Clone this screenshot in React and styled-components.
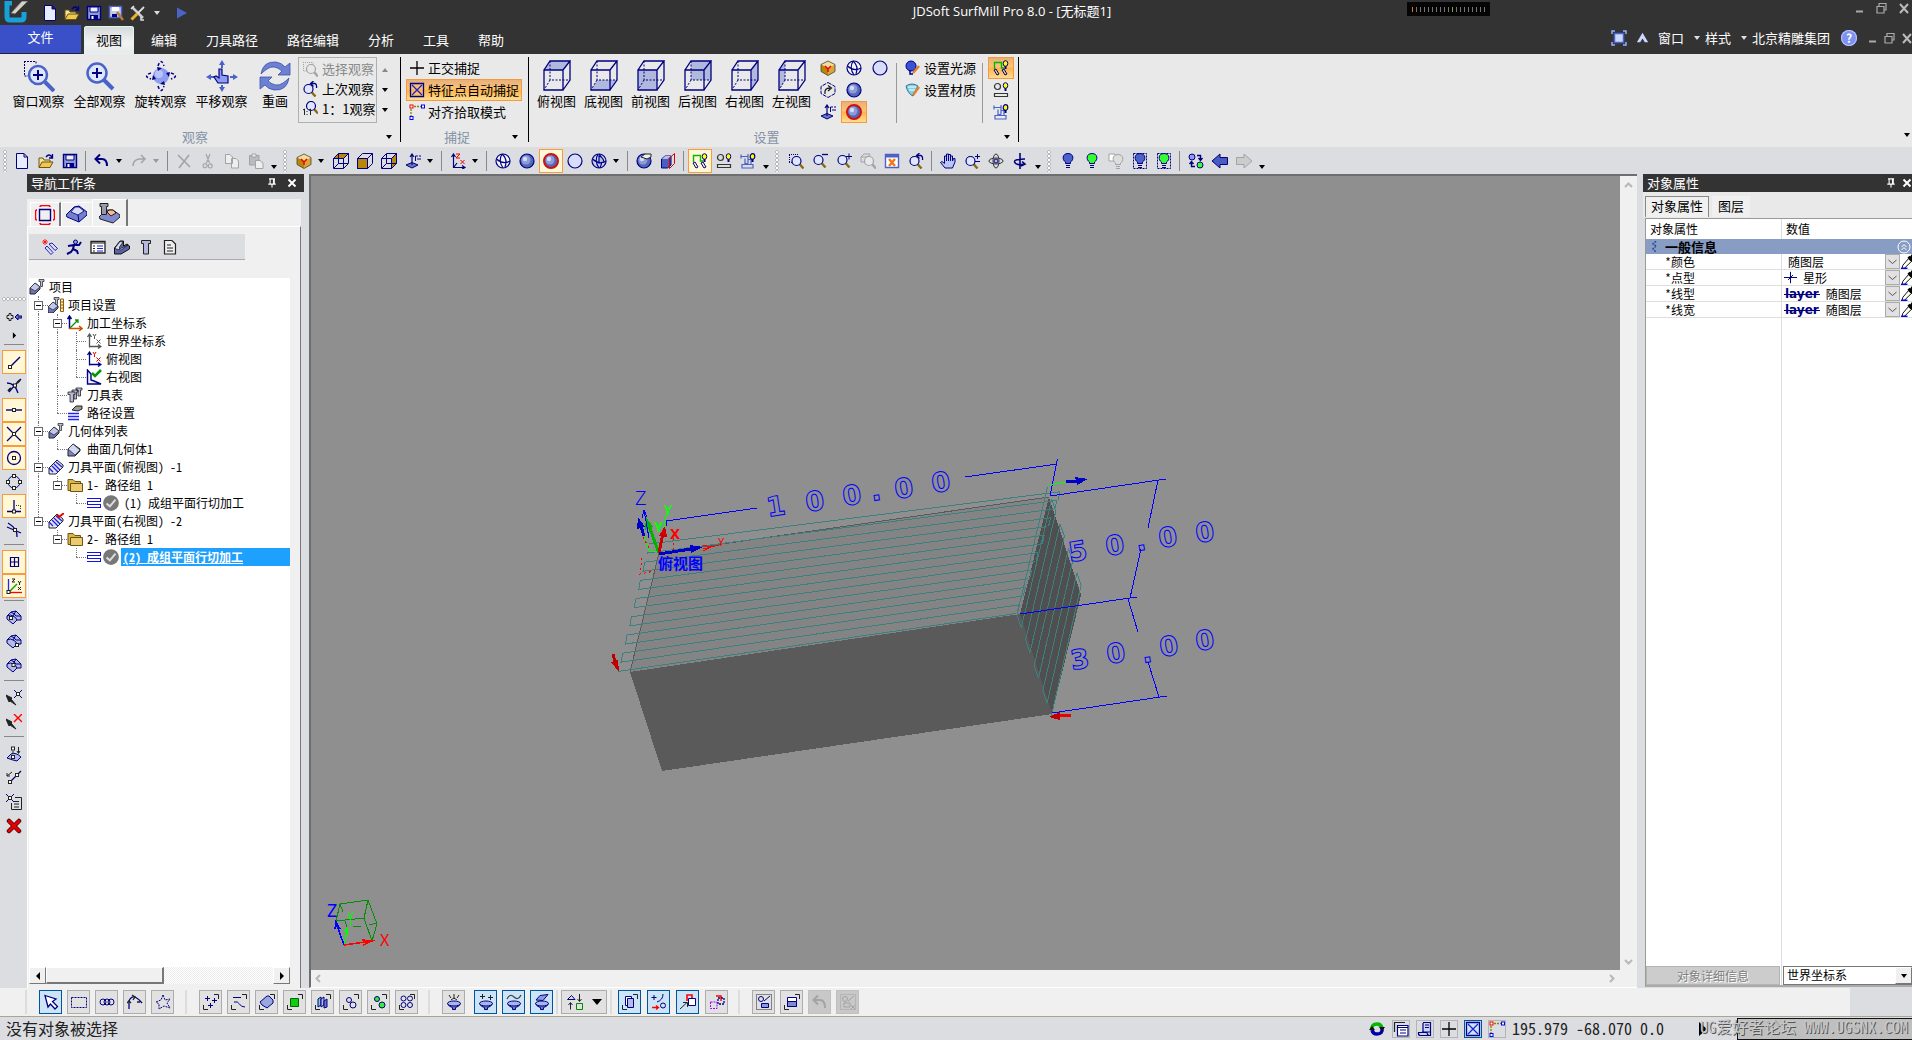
import React from 'react';
import styled, { createGlobalStyle, css } from 'styled-components';

const GlobalStyle = createGlobalStyle`
  * { box-sizing: border-box; }
  html, body { margin: 0; padding: 0; height: 100%; }
  #root { height: 100%; }
  body {
    font-family: "Noto Sans CJK SC", "Liberation Sans", sans-serif;
    font-size: 13px;
    line-height: 16px;
    color: #000;
    background: #dcdde0;
    overflow: hidden;
  }
  button, select { font: inherit; color: inherit; margin: 0; padding: 0; border: 0; background: none; }
  svg { display: block; flex: none; }
`;

const N = '#000080';
const B = '#4a63c8';
const L = '#b4bce6';
const G = '#a3a3a3';

/* ---------- icon parts ---------- */

const Lens = ({ x = 6.5, y = 7, c = N }) => (
  <g fill="none">
    <path d={`M${x + 3} ${y + 3}L${x + 7} ${y + 7.5}`} stroke={c === N ? '#8a6a10' : c} strokeWidth="2.4" />
    <circle cx={x} cy={y} r="4.5" stroke={c} strokeWidth="1.2" fill={c === N ? '#dfe6ff' : '#e8e8e8'} />
  </g>
);

const Bulb = ({ fill = B, c = N }) => (
  <g stroke={c} fill={fill}>
    <path d="M5.500 10.500V9C2 7 2 .5 8 .5S14 7 10.500 9v1.500z" />
    <path d="M6 12.500h4M6 14.500h4" />
  </g>
);

const MiniBulb = () => (
  <g>
    <path d="M12.500 6v3" stroke={N} strokeWidth="2" />
    <ellipse cx="12.500" cy="3.500" rx="2.300" ry="2.800" fill="#ff0" stroke={N} />
  </g>
);

const Sphere = ({ c = N, w = 1.2 }) => (
  <g>
    <circle cx="8" cy="8" r="7" fill="#5468b8" stroke={c} strokeWidth={w} />
    <circle cx="7" cy="7" r="4.500" fill="#8d9cd8" />
    <circle cx="6" cy="6" r="2.200" fill="#d4dbf6" />
  </g>
);

const cubeFaces = {
  top: 'M.5 5.5L5.500 .5H15.500L10.500 5.500z',
  front: 'M.5 5.500H10.500V15.500H.5z',
  right: 'M10.500 5.500L15.500 .5V10.500L10.500 15.500z',
};

const WireCube = ({ face }) => (
  <g fill="none" stroke={N}>
    <path d={cubeFaces[face]} fill="#b8860b" />
    <path d="M.5 5.500H10.500V15.500H.5zM.5 5.500L5.500 .5H15.500L10.500 5.500M15.500 .5V10.500L10.500 15.500" />
    {face !== 'front' && <path d="M5.500 1V10.500H15M5.500 10.500L1 15" />}
  </g>
);

const Block = ({ dx = 0 }) => (
  <g transform={`translate(${dx} 0)`} stroke="#222">
    <path d="M1 9L6 4L11 8V10L6 15H1z" fill="#6f76b8" />
    <path d="M6 4L11 8L6 12L1 9z" fill="#c3c8ea" strokeWidth=".7" />
  </g>
);

const Screw = ({ x = 10, y = 0 }) => (
  <path d={`M${x} ${y + .5}h5v2h-1.500v5h-2v-5h-1.500z`} fill="#b9bbd8" stroke="#333" strokeWidth=".8" />
);

const Sq = ({ x, y, c = '#222', f = '#fff' }) => <rect x={x - 1.5} y={y - 1.500} width="3" height="3" fill={f} stroke={c} />;

const Corners = ({ c = '#222' }) => <path d="M11 .5H15.500V5M.5 11V15.500H5" fill="none" stroke={c} />;

const Funnel = () => (
  <g fill="#6d7cc8" stroke={N}>
    <path d="M1.500 9.500Q3 13 6.500 13.500V15.500H9.500V13.500Q13 13 14.500 9.500z" />
    <ellipse cx="8" cy="9.500" rx="6.500" ry="2.500" fill="#aab6ea" />
  </g>
);

const Patch = () => (
  <g stroke={N} fill="#b4bce6">
    <path d="M1 6L5 2L10 1L15 6V10H11L7 14L1 9z" />
    <path d="M1 6Q5 4 7 6Q10 7 11 10M5 2Q9 4 10 6L15 6M7 6L10 1" fill="none" />
  </g>
);

const CsAxes = ({ c = N, x = '#e00' }) => (
  <g fill="none" stroke={c}>
    <path d="M3.500 14.500V2M1.500 4L3.500 1L5.500 4M3 13.500H14M12 11.500L15 13.500L12 15.500" strokeWidth="1.300" />
    <path d="M7 1L8.500 3.500L10 1M8.500 3.500V6M10.500 6.500L14.500 10.500M14.500 6.500L10.500 10.500" stroke={x} />
  </g>
);

const Strips = ({ c = '#11e' }) => (
  <path d="M1 3.500H15M1 6.500H15M1 9.500H15M1 12.500H15M14.500 3V7M1.500 6V10M14.500 9V13" stroke={c} fill="none" />
);

const Hatch = ({ red }) => (
  <g>
    <path d="M1 9L9 1L15 6V8L8 15H1z" fill="#dfe3fa" stroke="#222" />
    <path d="M4 7L10 13M6 5L12 11M8 3L14 8M1 9L5 13" stroke="#22c" strokeWidth="1.300" />
    {red && <path d="M9 2L11 4L16 0" stroke="#e00" strokeWidth="2" fill="none" />}
  </g>
);

const Folder = () => (
  <g>
    <path d="M1 2.500H6L8 4.500H13.500V13.500H1z" fill="#d9b54a" stroke="#6b5312" />
    <path d="M3.500 6.500H15.500V14.500H3.500z" fill="#ecca70" stroke="#6b5312" />
  </g>
);

const SnapLamp = ({ c = '#0b0' }) => (
  <g fill="none">
    <path d="M1.500 9V2.500H8.500V8H11" stroke={c} strokeWidth="1.400" />
    <path d="M1 10L4 15L6 14L3 9zM9 10L12 15L14 14L11 9z" stroke={N} />
    <MiniBulb />
  </g>
);

const icons = {
  page: <path d="M2.500 .5H10L13.500 4V15.500H2.500zM10 .5V4H13.500" fill="#e8ecff" stroke={N} />,
  open: <g><path d="M1 14V5H5L6 7H12V9" fill="#f6e39a" stroke="#6b5312" /><path d="M1 14.500L4 9H15L12 14.500z" fill="#f0c850" stroke="#6b5312" /><path d="M8 4Q11 0 14 4M14.500 1V5H11" fill="none" stroke={N} strokeWidth="1.300" /></g>,
  save: <g><path d="M1.500 1.500H14.500V14.500H1.500z" fill="#8d9cd8" stroke={N} strokeWidth="1.400" /><path d="M4 2H12V7H4z" fill="#eef" stroke={N} /><path d="M4 10H12V14.500H4z" fill={N} /><path d="M5.500 11H7.500V14H5.500z" fill="#fff" /></g>,
  saveAs: <g><path d="M1.500 1.500H13.500V12.500H1.500z" fill="#c8c8e8" stroke={B} strokeWidth="1.400" /><path d="M4 2H11V6H4z" fill="#fff" /><path d="M4 9H9V12H4z" fill={N} /><path d="M9 7L15 15" stroke="#b57a3a" strokeWidth="2.500" /></g>,
  wrench: <g fill="none"><path d="M2 2L13 13" stroke="#ccc" strokeWidth="2.500" /><path d="M14 2L7 9" stroke="#ddd" strokeWidth="1.800" /><path d="M7 9L1.500 14.500" stroke="#f0b020" strokeWidth="3" /><path d="M11 12V15H14M1 4L4 1" stroke="#ddd" strokeWidth="1.500" /></g>,
  play: <path d="M3 2.500L13 8L3 13.500z" fill={B} />,
  undo: <path d="M2 6H8Q13 6 13 13M6 1.500L1.500 6L6 10.500" fill="none" stroke={N} strokeWidth="2" />,
  undoGray: <path d="M2 6H8Q13 6 13 14M6 1.500L1.500 6L6 10.500" fill="none" stroke={G} strokeWidth="2" />,
  redo: <path d="M14 6H8Q2 7 2 13M10 2L14 6L10 10" fill="none" stroke={G} strokeWidth="1.500" />,
  cross: <path d="M2 2L14 14M13 2L3 15" stroke={G} strokeWidth="1.600" />,
  cut: <path d="M6 1L9.500 10M10 1L6.500 10M4 11a2 2 0 1 0 3 2a2 2 0 0 0-3-2M10 11a2 2 0 1 0 2 3a2 2 0 0 0-2-3" fill="none" stroke={G} strokeWidth="1.200" />,
  copy: <path d="M1.500 1.500H6L8.500 4V10.500H1.500zM7.500 5.500H12L14.500 8V15H7.500z" fill="#eee" stroke={G} />,
  paste: <g stroke={G}><path d="M1.500 2.500H11V12H1.500z" fill="#bbb" /><path d="M4 1H8V4H4z" fill="#eee" /><path d="M7.500 7.500H12L15 10V15.500H7.500z" fill="#eee" /></g>,
  isoCube: <g><path d="M8 1L15 4.500L8 8L1 4.500z" fill="#f6dc9a" /><path d="M1 4.500L8 8V15.500L1 11.500z" fill="#b8860b" /><path d="M15 4.500L8 8V15.500L15 11.500z" fill="#d9a53a" /><path d="M8 1L15 4.500V11.500L8 15.500L1 11.500V4.500z" fill="none" stroke="#443" strokeWidth=".8" /><path d="M5 6L8 9L11 6M8 9V12" stroke="#e00" strokeWidth="1.500" fill="none" /></g>,
  cubeTop: <WireCube face="top" />,
  cubeFront: <WireCube face="front" />,
  cubeRight: <WireCube face="right" />,
  plane: <g stroke={N}><path d="M1 12L7 9.500L13 12L7 15z" fill="#6a76c0" /><path d="M7 12V1.500M5 4L7 1L9 4" fill="none" strokeWidth="1.200" /><path d="M10.500 8V3H13M12 6H16M14 3H16" fill="none" /></g>,
  axesZX: <g fill="none" stroke={N}><path d="M3.500 2V14.500H15M1.500 4L3.500 1L5.500 4M12 12.500L15 14.500L12 16M4 14L7 10" strokeWidth="1.200" /><path d="M6 1H10L6 5H10M10.500 7L14.500 11M14.500 7L10.500 11" stroke="#e00" /></g>,
  globe: <g fill="none" stroke={N} strokeWidth="1.200"><circle cx="8" cy="8" r="7" fill="#f4f5fb" /><path d="M7 1Q3 8 8 15M7 1Q13 6 10 14M1.500 6Q8 12 15 8" /></g>,
  sphere: <Sphere />,
  redSphere: <Sphere c="#d01010" w={2} />,
  disc: <circle cx="8" cy="8" r="7" fill="#d8defa" stroke={N} strokeWidth="1.200" />,
  globe3: <g fill="none" stroke={N} strokeWidth="1.200"><circle cx="8" cy="8" r="7" fill="#c8d0ee" /><path d="M7 1Q3 8 8 15M8 1Q13 6 9 15M1.500 6Q8 12 15 8" /><path d="M8 3Q12 4 13 9L8 10z" fill={L} /></g>,
  sphereHand: <g><Sphere /><path d="M5 4L9 1H15V4L11 6L8 5z" fill="#eee" stroke="#222" /></g>,
  slice: <g><path d="M1.500 6L5 3H11V12L7.500 15H1.500z" fill="#4a5cc0" stroke={N} /><path d="M2 6H7.500L11 3H5z" fill={L} /><path d="M9.500 5L14.500 .5V10.500L9.500 15.500z" fill="none" stroke="#d00" /></g>,
  snapLamp: <SnapLamp />,
  geoLamp: <g fill="none"><circle cx="4.500" cy="4.500" r="3" stroke="#333" strokeWidth="1.200" /><path d="M1.500 11.500H14.500V14.500H1.500z" stroke="#333" strokeWidth="1.200" /><MiniBulb /></g>,
  machLamp: <g fill="none" stroke={B} strokeWidth="1.200"><path d="M1 1.500V5.500M1 3.500H8M8 1V10.500M5 5.500V10.500H8M2 11.500H13V15H2zM8 6.500H11M11 6V11" /><MiniBulb /></g>,
  zoomArea: <g><path d="M1 1.500H9M1.500 2V9M1 9.500H4M9.500 1V3" stroke={N} strokeDasharray="1 1" fill="none" /><Lens x={8.500} y={8} /></g>,
  zoomOut: <g><path d="M10 1.500H16" stroke={N} strokeWidth="1.300" /><Lens /></g>,
  zoomIn: <g><path d="M10 3.500H16M13 .5V6.500" stroke={N} /><Lens /></g>,
  zoomGray: <g><path d="M1 4L4 1H10L8 4zM1 4V9H8V4" fill="none" stroke={G} /><Lens x={9} y={8} c={G} /></g>,
  fit: <g><path d="M1.500 1.500H14.500V14.500H1.500z" fill="#fff" stroke={B} strokeWidth="1.400" /><path d="M1.500 3H14.500" stroke={B} strokeWidth="3" /><path d="M5 6L11 13M11 6L5 13" stroke="#f07818" strokeWidth="2.400" /></g>,
  zoomPrev: <g><Lens y={8} /><path d="M9 2.500H13Q15 3 14.500 7M11.500 0L8.500 2.500L11.500 5.500" fill="none" stroke={N} strokeWidth="1.300" /></g>,
  hand: <path d="M5 15L.5 9.500L2 8.500L4.500 10.500V3H6.500V8V1H8.500V8V1.500H10.500V8V3H12.500V8L13.500 5.500H15V9L12.500 15z" fill="#b8c4f4" stroke={N} />,
  zoomPM: <g><Lens y={8} /><path d="M11 3.500H16M13.500 1V6M11 8.500H16" stroke={N} /></g>,
  move3d: <g fill="none" stroke="#333"><ellipse cx="8" cy="8" rx="7" ry="3" /><ellipse cx="8" cy="8" rx="3" ry="7" /><circle cx="8" cy="8" r="2" fill={L} stroke={N} /></g>,
  spin: <path d="M8 0V16M13 6Q2 6 2.500 9Q4 13 12 11M10 8.500L13 11L9 13" fill="none" stroke={N} strokeWidth="1.600" />,
  bulb: <Bulb />,
  bulbGreen: <Bulb fill="#3f3" />,
  bulbGray: <g><path d="M1 1H7V8H1z" fill="#fff" stroke={G} /><g transform="translate(2 1)"><Bulb fill="#ddd" c={G} /></g></g>,
  bulbBox: <g><path d="M1.500 .5H14.500V15.500H1.500z" fill="none" stroke={N} strokeDasharray="2 1" /><Bulb /></g>,
  bulbBoxGreen: <g><path d="M1.500 .5H14.500V15.500H1.500z" fill="none" stroke={N} strokeDasharray="2 1" /><Bulb fill="#3f3" /></g>,
  swap: <g stroke={N}><circle cx="4" cy="4" r="3" fill="#8d9cf0" /><circle cx="12" cy="12" r="3" fill="#3f3" /><path d="M9 2.500H12.500V7M10.500 5L12.500 7.500L14.500 5M7 13.500H3.500V9M1.500 11L3.500 8.500L5.500 11" fill="none" strokeWidth="1.400" /></g>,
  arrowL: <path d="M0 8L8 1V4.500H15.500V11.500H8V15z" fill="#4a5cc0" stroke={N} />,
  arrowR: <path d="M16 8L8 1V4.500H.5V11.500H8V15z" fill="#ccc" stroke={G} />,
  listPick: <g><path d="M1 1.500H11V10H1.500V1" stroke={G} strokeDasharray="1 1" fill="none" /><Lens x={9} y={8} c={G} /></g>,
  one: <g><Lens x={9} y={5} /><path d="M1 9L2.500 8V14M5 10V11M5 13V14M7 9L8.500 8V14" stroke="#222" fill="none" /></g>,
  plus: <path d="M8 1V15M1 8H15" stroke="#000" strokeWidth="1.300" />,
  boxX: <g fill="none" stroke={N} strokeWidth="1.300"><path d="M1.500 1.500H14.500V14.500H1.500z" /><path d="M3 3L13 13M13 3L3 13" stroke="#22c" /></g>,
  align: <g fill="none"><path d="M2 5V12M5 2.500H12" stroke="#8a8000" strokeDasharray="2 1" strokeWidth="1.300" /><Sq x={2.500} y={2.500} c="#e00" /><Sq x={14} y={2.500} c="#00f" /><Sq x={2.500} y={14} c="#00f" /></g>,
  hexTurn: <g fill="none" stroke={N}><path d="M8 .5L15 4.500V11.500L8 15.500L1 11.500V4.500z" strokeDasharray="4 1" /><path d="M5 12Q4 6 10 6M8 3.500L11.500 6L8 9" stroke="#222" strokeWidth="1.300" /></g>,
  light: <g><circle cx="6" cy="6" r="5" fill="#3a52d8" stroke={N} /><path d="M5 10V14H8" stroke={N} fill="none" strokeWidth="1.500" /><path d="M8 13L14 6" stroke="#e08030" strokeWidth="2.500" /></g>,
  material: <g><path d="M1 4Q7 0 13 4L8 14Q3 12 1 4z" fill="#7fd0e8" stroke="#378" /><path d="M3 5H11M4 8H10" stroke="#fff" /><path d="M8 13L14 5" stroke="#e08030" strokeWidth="2.500" /></g>,
  /* left snap strip */
  plusArrow: <g stroke={N} fill="none"><path d="M3 4.500V6.500H1V9.500H3V11.500H5V9.500H7V6.500H5V4.500z" stroke="#222" /><path d="M9 8L12 5V7H16V9H12V11z" fill="#6a76c0" /></g>,
  tri: <path d="M6 4L10 8L6 12z" fill="#000" />,
  endPt: <g><path d="M4 13L14 3" stroke={N} strokeWidth="1.400" /><Sq x={4} y={13} /></g>,
  nearPt: <g fill="none" stroke={N}><path d="M1 5Q9 5 12 15M3 14L8 8L15 1" strokeWidth="1.300" /><path d="M14 2L11 5M2 13L5 10" stroke="#222" strokeWidth="2" /><Sq x={9} y={7.500} /></g>,
  midPt: <g><path d="M0 8H16" stroke={N} strokeWidth="1.400" /><Sq x={8} y={8} /></g>,
  interPt: <g><path d="M1 1Q8 8 15 15M15 1Q8 8 1 15" stroke={N} strokeWidth="1.300" /><Sq x={8} y={8} /></g>,
  center: <g><circle cx="8" cy="8" r="6.500" fill="none" stroke={N} strokeWidth="1.300" /><Sq x={8} y={8} /></g>,
  quad: <g><circle cx="8" cy="8" r="6" fill="none" stroke={N} /><Sq x={8} y={2} /><Sq x={8} y={14} /><Sq x={2} y={8} /><Sq x={14} y={8} /></g>,
  perp: <g><path d="M8 2V13M1 13.500H15" stroke={N} strokeWidth="1.300" /><path d="M10 7.500H14.500M14.500 8V12" stroke="#333" strokeDasharray="1 1" fill="none" /><Sq x={8} y={13.500} /></g>,
  tangent: <g fill="none"><path d="M2 1Q12 7 11 15M1 5L15 11" stroke={N} strokeWidth="1.300" /><Sq x={9} y={8} /></g>,
  gridPt: <path d="M4.500 3.500H12.500V12.500H4.500zM8.500 3V13M4 8H13" fill="none" stroke={N} strokeWidth="1.200" />,
  axesXYZ: <g fill="none"><path d="M2.500 1V14" stroke="#22f" strokeWidth="1.300" /><path d="M3 14L11 6" stroke="#0a0" strokeWidth="1.500" /><path d="M3 14.500H16" stroke="#f00" strokeWidth="1.300" /><path d="M6 1H9L6 4H9M12 3L13.500 5L15 3M13.500 5V7M12 9L15 12M15 9L12 12" stroke="#222" /><Sq x={2.500} y={14} /></g>,
  patchA: <g><Patch /><Sq x={5} y={8} /></g>,
  patchB: <g><Patch /><Sq x={11} y={11} /></g>,
  patchC: <g><Patch /><Sq x={7.500} y={7} /></g>,
  pickPt: <g><path d="M0 5L6 8L5 9L10 15L4 11L3 12z" fill="#222" stroke="#222" /><path d="M8 0L16 8M16 0L8 8" stroke={N} /><Sq x={12} y={4} /></g>,
  pickX: <g><path d="M0 5L6 8L5 9L10 15L4 11L3 12z" fill="#222" stroke="#222" /><path d="M8 0L16 8M16 0L8 8" stroke="#f00" strokeWidth="1.400" /></g>,
  project: <g><path d="M1 12L5 8Q10 6 15 11L11 15Q6 14 1 12z" fill={L} stroke={N} /><Sq x={7} y={2.500} /><Sq x={7} y={11} /><path d="M7 5V8M12.500 1V7M11 5L12.500 7.500L14 5" stroke="#222" fill="none" /></g>,
  along: <g><path d="M3 13L15 1" stroke={N} strokeWidth="1.300" /><path d="M6 2L1 6M1 3V6H4" stroke="#222" fill="none" /><Sq x={4} y={12} /><Sq x={11} y={5} /></g>,
  ptList: <g fill="none"><path d="M5.500 9V15.500H15.500V3.500H9M8 7.500H13M8 10H13M8 13H13" stroke="#222" /><path d="M0 0L8 8M8 0L0 8" stroke={N} /><Sq x={4} y={4} /></g>,
  bigX: <g fill="none"><path d="M3 3L13 13M13 3L3 13" stroke="#400" strokeWidth="4.500" strokeLinecap="round" /><path d="M3 3L13 13M13 3L3 13" stroke="#e80000" strokeWidth="3" strokeLinecap="round" /></g>,
  /* navigator */
  navA: <g fill="none"><path d="M4.500 4.500H15.500V15.500H4.500z" stroke={N} strokeWidth="1.400" /><path d="M5 2Q5 0.500 7 .5H13Q15 .5 15 2M5 18Q5 19.500 7 19.500H13Q15 19.500 15 18M2 5Q.5 5 .5 7V13Q.5 15 2 15M18 5Q19.500 5 19.500 7V13Q19.500 15 18 15" stroke="#f00" strokeWidth="1.500" /></g>,
  navB: <g stroke={N}><path d="M0 11L8 3L13 2L21 8V11L13 18L1 13z" fill="#7480cc" /><path d="M5 8L9 3L13 3L18 7L12 11z" fill="#d8dcf6" strokeWidth=".8" /><path d="M12 11L13 18" /></g>,
  navC: <g stroke="#222"><path d="M0 14L7 7H14L21 12V14L14 20L1 16z" fill="#8088d0" /><path d="M8 9L10 7H14L17 10L12 13z" fill="#f8b890" /><path d="M1 .5H9V3.500H7.500V11.500H2.500V3.500H1z" fill="#99a" /></g>,
  stripStar: <g><path d="M3 9L9 15.500M5 7L11 13.500M7 5L13 11.500M10 4L15.500 9.500M3 9L5 7M9 15.500L11 13.500M7 5L10 4M13 11.500L15.500 9.500" stroke="#22c" fill="none" /><path d="M3 0V6M0 3H6M1 1L5 5M5 1L1 5" stroke="#f00" strokeWidth=".8" /></g>,
  runner: <g fill="none" stroke={N}><circle cx="9.500" cy="3" r="2" fill="#8d9cd8" /><path d="M2 7L8 6L13 6L15 3M8 6L7 10L11 12L12 15M7 10L5 13L1 15" strokeWidth="2" /></g>,
  winList: <g><path d="M1 2.500H15V14H1z" fill="#fff" stroke="#222" strokeWidth="1.300" /><path d="M1 4H15" stroke="#222" /><path d="M3 7H5M3 9.500H5M3 12H5" stroke="#222" /><path d="M7 7H13M7 9.500H13M7 12H13" stroke="#22c" /></g>,
  vBlock: <g stroke="#111"><path d="M.5 9L6 2H9.500V7L13 5L15.500 7V10L7 15H.5z" fill="#5a62a8" /><path d="M1 9L6 2.500L9 3L5.500 8V10L14 6L7 11L2 10z" fill="#dde" strokeWidth=".7" /></g>,
  bolt: <path d="M3.500 1.500H12.500V4.500H10.500V15H5.500V4.500H3.500z" fill="#b5b8dc" stroke="#222" />,
  doc: <path d="M2.500 1.500H10L13.500 5V15H2.500zM5 6H9M5 9H11M5 12H11" fill="#eee" stroke="#222" strokeWidth="1.200" />,
  proj: <g><Block dx={0} /><Screw x={10} /></g>,
  projSet: <g><g transform="translate(0 1)"><Block dx={-1} /></g><Screw x={6} /><path d="M12.500 2H15.500V14.500H12.500zM12.500 5H15.500M12.500 8H15.500M12.500 11H15.500" stroke="#8a6010" fill="#fbe9b0" /></g>,
  cs: <g fill="none"><path d="M2.500 14V2M.5 4L2.500 1L4.500 4" stroke={N} strokeWidth="1.500" /><path d="M3 13L11 5M8 5H11V8" stroke="#090" strokeWidth="1.300" /><path d="M2 13.500H14M12 11L15 13.500L12 16" stroke="#d05000" strokeWidth="1.500" /></g>,
  csGray: <CsAxes c="#555" x="#555" />,
  csBlue: <CsAxes />,
  csCheck: <g fill="none"><path d="M1.500 1V15H15L8 12L5 11V5z" stroke={N} strokeWidth="1.400" fill="#eef" /><path d="M6 4L9 7L15 1" stroke="#090" strokeWidth="2.500" /></g>,
  tools3: <g fill="#b9bbd8" stroke="#222" strokeWidth=".8"><path d="M9 1H15V3H13.500V9H11V3H9zM5 3H11V5H9.500V12H7V5H5z" /><path d="M1 5H8V7.500H6.500V15H3V7.500H1z" /></g>,
  pathSet: <g><path d="M1 8.500H12M1 11.500H12M1 14.500H12" stroke="#22f" strokeWidth="1.500" /><path d="M5 5L9 1H15V4L11 6z" fill="#999" stroke="#222" /></g>,
  surf: <g stroke="#222"><path d="M1 8L6 3L13 8V10L8 15H1z" fill="#7c84c4" /><path d="M6 3L13 9L8 14L1 8z" fill="#d3d7f0" strokeWidth=".7" /></g>,
  hatch: <Hatch />,
  hatchRed: <Hatch red />,
  folder: <Folder />,
  strips: <Strips />,
  check: <g><circle cx="8" cy="8" r="7" fill="#777" /><path d="M4 8.500L7 11L12 5" stroke="#ddd" strokeWidth="1.800" fill="none" /></g>,
  /* selection bar */
  cursor: <path d="M2 1.500L13 5L9.500 7.500L14.500 12.500L12 15L7.500 10L5 13z" fill="#fff" stroke={N} strokeWidth="1.300" />,
  marquee: <path d="M.5 3.500H15.500V13.500H.5z" fill="none" stroke={N} strokeDasharray="2 1" />,
  chain: <g fill="none" stroke={N}><circle cx="4" cy="8" r="3" /><circle cx="8" cy="8" r="3" /><circle cx="12" cy="8" r="3" /></g>,
  spline: <g fill="none"><path d="M2 15V7Q4 2 8 3Q12 5 15 9" stroke={N} strokeWidth="1.300" /><path d="M0 9L2 7L4 9M5 1L8 3L6 6M10 8H13" stroke="#222" strokeWidth="1.300" /></g>,
  star: <path d="M8 1L10 6L15 5L12 9L15 14L9 12L4 15L4 10L1 8L6 6z" fill="none" stroke={N} strokeDasharray="2 1" />,
  selPts: <g stroke={N}><Corners /><path d="M4.500 2V7M2 4.500H7M11.500 4V9M9 6.500H14M7.500 9V14M5 11.500H10" /></g>,
  selLine: <g fill="none" stroke={N}><path d="M2 3.500H10M3 8Q7 7 8.500 10T14 13" /><Corners /></g>,
  selSurf: <g stroke={N}><Corners /><path d="M1 8L8 2L10 2L14 6V9L8 14L3 11z" fill="#9aa6de" /></g>,
  selGreen: <g><Corners /><path d="M3.500 4.500H11.500V12.500H3.500z" fill="#1c1" stroke="#060" /></g>,
  selMulti: <g stroke={N}><Corners /><path d="M3 5L6 3V11L3 13z" fill="#7fd0c8" /><path d="M6 5L9 3V11L6 13z" fill={L} /><path d="M9 7L12 5V13L9 14z" fill="#6a76c8" /></g>,
  selCirc: <g stroke={N} fill="none"><Corners /><circle cx="6" cy="6" r="2.500" /><circle cx="10" cy="11" r="3" /></g>,
  selCircG: <g stroke={N} fill="#3e3"><Corners /><circle cx="6" cy="5" r="2.500" /><circle cx="11" cy="11" r="3" /></g>,
  selFour: <g stroke={N} fill="none"><Corners /><circle cx="4.500" cy="4.500" r="2.500" /><circle cx="11" cy="4.500" r="2.500" /><circle cx="4.500" cy="11" r="2.500" /><circle cx="11" cy="11" r="2.500" /></g>,
  filAll: <g><Funnel /><path d="M3 1L5 4M8 0V5M13 1L11 4M5 6L8 4L11 6" stroke="#222" fill="none" /></g>,
  filPts: <g><Funnel /><path d="M4.500 0V5M2 2.500H7M12.500 1V6M10 3.500H15" stroke="#222" /></g>,
  filLine: <g><Funnel /><path d="M1 5Q4 -1 8 3T15 1" stroke="#444" fill="none" strokeWidth="1.300" /></g>,
  filSurf: <g><Funnel /><path d="M2 6L6 1.500L14 .5L9 6.500z" fill="#8d9cd8" stroke={N} /></g>,
  order: <g fill="none"><path d="M.5 5.500L4.500 1.500L8 5.500z" stroke={N} /><path d="M12.500 0V7M10.500 5L12.500 7.500L14.500 5M3.500 15.500V9M1.500 11L3.500 8.500L5.500 11" stroke="#222" /><path d="M9.500 9.500H15.500V15.500H9.500z" stroke="#080" /></g>,
  visA: <g stroke={N}><Corners /><path d="M3.500 2.500H9.500V11.500H3.500z" fill="#fff" /><path d="M5.500 4.500H11.500V13.500H5.500z" fill={L} /></g>,
  visB: <g fill="none" stroke={N}><path d="M3 1V6M.5 3.500H5.500M12 0Q12 6 6 8" /><circle cx="12" cy="11.500" r="2.500" /><path d="M1 13.500H7M5 11.500L7.500 13.500L5 15.500" stroke="#f00" strokeWidth="1.300" /></g>,
  visC: <g fill="none" stroke={N}><path d="M7 7V1H12V4" stroke="#f00" strokeWidth="1.600" /><path d="M8.500 4.500H15.500V11.500H8.500z" fill="#fff" /><path d="M0 15L7 8.500M3 8.500H7.500V13" stroke="#222" /></g>,
  visD: <g fill="none"><path d="M1.500 8H8V14.500H1.500z" stroke="#a0f" strokeDasharray="2 1" /><path d="M7 2H12V7" stroke="#f00" strokeWidth="1.400" /><path d="M9 4H15V10H9z" stroke={N} strokeDasharray="2 1" strokeWidth="1.300" /></g>,
  grpA: <g fill="none"><path d="M.5 .5H15.500V15.500H.5z" stroke="#222" strokeDasharray="1 1" /><circle cx="5" cy="5" r="2.500" stroke={N} /><path d="M8 7L14 2" stroke={N} /><path d="M5.500 9.500H12.500V13.500H5.500z" fill="#8d9cd8" stroke={N} /></g>,
  grpB: <g><Corners /><path d="M3.500 3.500H12.500V12.500H3.500z" fill="#fff" stroke={N} /><path d="M3.500 7.500H12.500V12.500H3.500z" fill="#7d8ad0" stroke={N} /></g>,
  grpGray: <g fill="none" stroke={G}><path d="M.5 .5H15.500V15.500H.5z" strokeDasharray="1 1" /><circle cx="5" cy="5" r="2.500" /><path d="M8 7L14 2M4 9H10V13H4zM11 11L15 15M15 11L11 15" /></g>,
  refresh: <g fill="none" strokeWidth="3.500"><path d="M3 9Q2 3 8 3Q12 3 13 7" stroke="#0b0" /><path d="M13 7Q14 13 8 13Q4 13 3 9" stroke="#00a" /><path d="M10 6H16L13 10zM0 9H6L3 5z" fill="#111" stroke="none" /></g>,
  winStack: <g fill="#fff" stroke={N}><path d="M1.500 11V1.500H12" fill="none" stroke="#222" strokeWidth="1.200" /><path d="M4.500 4.500H15V15H4.500zM5 6.500H15M7 9H13M7 12H13" strokeWidth="1.200" /></g>,
  scroll: <path d="M6 1.500H13.500V11H5M13.500 11V14.500H3Q1 14 1.500 11.500H10Q10 14 12 14.500M6 2V11M8 4H12M8 6.500H12" fill="#ccd2f2" stroke={N} strokeWidth="1.200" />,
  screenPick: <g fill="none" stroke="#9ab0ff" strokeWidth="1.500"><path d="M1 4V1H4M12 1H15V4M15 12V15H12M4 15H1V12" /><path d="M3.500 3.500H12.500V12.500H3.500z" fill="#cdd8ff" stroke={B} /></g>,
  chevUp: <path d="M2 13L8 3L14 13H10.500L8 9L5.500 13z" fill="#cdd8ff" />,
  restore: <path d="M4 5V2.500H11V9H9M2 5.500H9V12H2z" fill="none" stroke="#aaa" strokeWidth="1.200" />,
  minimize: <path d="M3 10.500H10" stroke="#aaa" strokeWidth="2" />,
  closeW: <path d="M3 3L11 12M11 3L3 12" stroke="#bbb" strokeWidth="2" />,
  pin: <path d="M4 2.500H12M5.500 2V9M10 2V9M11 2V9M3 9.500H13M8 10V14" stroke="#fff" strokeWidth="1.500" fill="none" />,
  closeP: <path d="M4 4L12 12M12 4L4 12" stroke="#fff" strokeWidth="2.200" />,
  pipette: <g><path d="M9 5L12 8L5 15L2 16L3 12z" fill="#fff" stroke="#000" /><path d="M9 3L14 8M11 5L14 1" stroke="#000" strokeWidth="3" /><path d="M1 15.500H8" stroke="#00f" strokeWidth="2" /></g>,
  starPt: <path d="M0 8H16M8 1V15M5 11L11 5" stroke={N} strokeWidth="1.200" />,
};

const Icon = ({ n, size = 16, box = 16 }) => (
  <svg width={size} height={size} viewBox={`0 0 ${box} ${box}`} aria-hidden="true">{icons[n]}</svg>
);

/* large ribbon pictures */
const faces = {
  top: '1,10 7,1 27,1 20,10',
  bottom: '1,30 7,20 27,20 20,30',
  front: '1,10 20,10 20,30 1,30',
  back: '7,1 27,1 27,20 7,20',
  right: '20,10 27,1 27,20 20,30',
  left: '1,10 7,1 7,20 1,30',
};

const ViewCube = ({ face }) => (
  <svg width="28" height="32" viewBox="0 0 28 32" fill="none" stroke={N} strokeWidth="1.300">
    <polygon points={faces[face]} fill="#b0b8dc" stroke="none" />
    <path d="M1 10H20V30H1zM1 10L7 1H27L20 10M27 1V20L20 30" />
    <path d="M7 1V20H27M7 20L1 30" strokeDasharray="2 1.500" strokeWidth="1" />
  </svg>
);

const big = {
  zoomWin: <g fill="none"><path d="M1 1.500H13V4M1.500 1V16H5" stroke={N} strokeDasharray="2 1" /><circle cx="15" cy="15" r="9" stroke={B} strokeWidth="2.500" fill="#dfe6fb" /><path d="M22 22L31 31" stroke={B} strokeWidth="4" /><path d="M15 10V20M10 15H20" stroke={N} strokeWidth="2" /></g>,
  zoomAll: <g fill="none"><circle cx="13" cy="13" r="9.500" stroke={B} strokeWidth="2.500" fill="#dfe6fb" /><path d="M20 20L29 29" stroke={B} strokeWidth="4" /><path d="M13 8V18M8 13H18" stroke={N} strokeWidth="2" /></g>,
  rotate: <g fill="none"><circle cx="16" cy="16" r="8" fill="#8d9df0" /><circle cx="14" cy="14" r="4" fill="#b9c4fa" /><path d="M13 6Q16 -3 19 6M13 26Q16 35 19 26M6 13Q-3 16 6 19M26 13Q35 16 26 19" stroke={N} strokeWidth="1.500" strokeDasharray="3 2" /><path d="M12 7L17 8L13 11zM20 25L15 24L19 21zM7 20L8 15L11 19zM25 12L24 17L21 13z" fill={N} /></g>,
  pan: <g fill={B}><path d="M16 0L19 5H17V8H15V5H13zM16 32L19 27H17V25H15V27H13zM0 17L5 14V16H9V18H5V20zM32 17L27 14V16H24V18H27V20z" /><path d="M13 9H16V15L22 16V23H12L8 17L10 16L13 18z" fill="#8d9df0" stroke={N} strokeWidth="1.200" /></g>,
  redraw: <g fill="#6c80d4" stroke="#4050a8" strokeWidth=".8"><path d="M2 14Q4 1 17 2Q23 3 26 7L31 3V15H19L23 11Q15 4 8 9Q5 11 2 14z" /><path d="M30 18Q28 31 15 30Q9 29 6 25L1 29V17H13L9 21Q17 28 24 23Q27 21 30 18z" /></g>,
};

const BigIcon = ({ n }) => <svg width="32" height="32" viewBox="0 0 32 32" aria-hidden="true">{big[n]}</svg>;

/* ---------- shell ---------- */

const Shell = styled.div`
  display: flex;
  flex-direction: column;
  height: 100vh;
  overflow: hidden;
`;

const TitleBar = styled.header`
  position: relative;
  display: flex;
  align-items: center;
  height: 25px;
  flex: none;
  background: #333;
  color: #fff;
`;

const Quick = styled.div`
  display: flex;
  align-items: center;
  width: 190px;
  gap: 6px;
`;

const Logo = styled.span`
  width: 32px;
  padding-left: 4px;
`;

const ThinLine = styled.span`
  width: 1px;
  height: 16px;
  background: #777;
`;

const Plain = styled.button`
  display: flex;
  align-items: center;
  justify-content: center;
  flex: none;
  width: ${p => p.$w || 16}px;
  height: ${p => p.$h || 16}px;
`;

const Title = styled.h1`
  flex: 1;
  margin: 0;
  padding: 0 19px 3px 0;
  text-align: center;
  font: 400 13px/18px "Open Sans", "Noto Sans CJK SC", sans-serif;
`;

const Gauge = styled.div`
  position: absolute;
  right: 422px;
  top: 2px;
  display: flex;
  align-items: center;
  justify-content: space-between;
  width: 83px;
  height: 14px;
  padding: 0 5px;
  background: #050505;
  span { width: 1px; height: 5px; background: #777; }
  span:first-child { background: #e07a10; }
  span:nth-child(11) { background: #7a3; }
`;

const WinCtl = styled.div`
  display: flex;
  align-items: center;
  flex: none;
  align-self: ${p => (p.$tight ? 'center' : 'flex-start')};
  gap: ${p => (p.$tight ? 3 : 8)}px;
  width: ${p => (p.$tight ? 46 : 59)}px;
  overflow: hidden;
`;

const MenuBar = styled.nav`
  display: flex;
  align-items: flex-end;
  gap: 5px;
  height: 29px;
  flex: none;
  background: #333;
  color: #fff;
`;

const FileTab = styled.button`
  width: 81px;
  height: 29px;
  margin-right: -2px;
  padding-bottom: 4px;
  background: #3a50c8;
  border-bottom: 1px solid #223;
`;

const Tab = styled.button`
  height: 28px;
  padding: 0 12px;
  border-radius: 3px 3px 0 0;
  ${p => p.$on && css`
    color: #000;
    background: linear-gradient(#d4d8da, #f2f3f3 60%, #e8e8e8);
    box-shadow: inset 0 0 0 1px #dff5f5;
  `}
`;

const MenuRight = styled.div`
  display: flex;
  align-items: center;
  align-self: stretch;
  gap: 5px;
  margin-left: auto;
  padding-bottom: 4px;
`;

const Help = styled.button`
  width: 16px;
  height: 16px;
  border-radius: 50%;
  margin: 0 4px 0 6px;
  background: #7d92f2;
  box-shadow: inset 0 0 0 1px #b9c6ff;
  color: #fff;
  font-weight: 700;
  font-size: 12px;
  line-height: 16px;
`;

const Down = styled.span`
  width: 0;
  height: 0;
  flex: none;
  border: 3px solid transparent;
  border-top: 4px solid ${p => p.$c || '#000'};
  border-bottom: 0;
`;

const MenuDrop = styled.button`
  display: flex;
  align-items: center;
  gap: 10px;
`;

/* ---------- ribbon ---------- */

const Ribbon = styled.section`
  display: flex;
  height: 93px;
  flex: none;
  background: #e9e9e9;
`;

const Group = styled.div`
  display: flex;
  flex-direction: column;
  flex: none;
  position: relative;
  padding: 3px ${p => p.$pr || 5}px 0 ${p => p.$pl || 4}px;
  &::after {
    content: '';
    position: absolute;
    right: 0;
    top: 3px;
    bottom: 5px;
    width: 1px;
    background: #000;
  }
`;

const GroupBody = styled.div`
  display: flex;
  height: 72px;
`;

const GroupLabel = styled.div`
  display: flex;
  align-items: center;
  color: #8593a8;
  height: 16px;
  > span { flex: 1; text-align: center; }
`;

const RibbonEnd = styled.div`
  margin: auto 2px 10px auto;
`;

const BigButton = styled.button`
  display: flex;
  flex-direction: column;
  align-items: center;
  gap: 1px;
  width: ${p => p.$w}px;
  padding-top: 3px;
  height: 56px;
  white-space: nowrap;
`;

const ListBox = styled.div`
  width: 79px;
  height: 66px;
  padding: 1px 3px;
  border: 1px solid #b0b0b0;
`;

const ListRow = styled.button`
  display: flex;
  align-items: center;
  gap: 4px;
  height: 20px;
  white-space: nowrap;
  color: ${p => (p.$off ? '#8a8a8a' : '#000')};
`;

const Arrows = styled.div`
  display: flex;
  flex-direction: column;
  width: 19px;
  padding-top: 3px;
`;

const Up = styled.span`
  border: 3px solid transparent;
  border-bottom: 4px solid #888;
  border-top: 0;
`;

const Stack = styled.div`
  display: flex;
  flex-direction: column;
`;

const RowButton = styled.button`
  display: flex;
  align-items: center;
  gap: 3px;
  height: 22px;
  padding: 0 2px 1px;
  white-space: nowrap;
  border: 1px solid ${p => (p.$on ? '#f59a3c' : 'transparent')};
  background: ${p => (p.$on ? 'linear-gradient(#e8b078, #fcc478 45%, #fdb24c 50%, #fddc90)' : 'none')};
`;

const Grid = styled.div`
  display: grid;
  grid-template-columns: repeat(${p => p.$cols}, 26px);
  grid-auto-flow: column;
  grid-template-rows: repeat(3, 22px);
`;

const SmallButton = styled(RowButton)`
  justify-content: center;
  padding: 0;
`;

const InnerSep = styled.span`
  width: 1px;
  height: 60px;
  margin: 6px 5px 0 3px;
  background: #999;
`;

/* ---------- toolbars ---------- */

const ToolBar = styled.div`
  display: flex;
  align-items: center;
  height: 27px;
  flex: none;
  background: #dcdde0;
`;

const Tool = styled.button`
  display: flex;
  align-items: center;
  justify-content: center;
  width: 24px;
  height: 24px;
  flex: none;
  border: 1px solid ${p => (p.$on ? '#f99b3a' : 'transparent')};
  background: ${p => (p.$on ? '#fff7d6' : 'none')};
`;

const ToolDrop = styled.button`
  display: flex;
  justify-content: center;
  align-items: ${p => (p.$low ? 'flex-end' : 'center')};
  width: ${p => (p.$low ? 12 : 13)}px;
  height: 16px;
  padding-right: ${p => (p.$low ? 0 : 3)}px;
`;

const ToolSep = styled.span`
  width: 8px;
  height: 20px;
  background: linear-gradient(#888, #888) 3px 0 / 1px 100% no-repeat;
`;

const Grip = styled.span`
  width: ${p => (p.$first ? 10 : 12)}px;
  height: 22px;
  background: radial-gradient(circle, #fff 1px, #b8b8b8 1px 2px, transparent 2px) 3px 0 / 4px 4px repeat-y;
`;

const Main = styled.main`
  display: flex;
  flex: 1;
  min-height: 0;
  background: #dcdde0;
`;

const SideStrip = styled.div`
  display: flex;
  flex-direction: column;
  align-items: center;
  width: 27px;
  flex: none;
  padding: 123px 0 0 1px;
`;

const SideGrip = styled.span`
  width: 24px;
  height: 8px;
  background: radial-gradient(circle, #fff 1px, #b8b8b8 1px 2px, transparent 2px) 0 0 / 4px 4px repeat-x;
`;

const SideSep = styled.span`
  width: 20px;
  height: 8px;
  flex: none;
  background: linear-gradient(#888, #888) 0 2px / 100% 1px no-repeat;
`;

/* ---------- docked panels ---------- */

const Panel = styled.aside`
  display: flex;
  flex-direction: column;
  flex: none;
  width: ${p => p.$w}px;
`;

const PanelTitle = styled.div`
  display: flex;
  align-items: center;
  gap: 4px;
  height: 18px;
  flex: none;
  padding: 0 ${p => p.$pr}px 0 4px;
  background: #333;
  color: #fff;
  overflow: hidden;
  span { flex: 1; }
`;

const NavBody = styled.div`
  display: flex;
  flex-direction: column;
  flex: 1;
  min-height: 0;
  margin: 7px 3px 0 0;
  background: #f0f0f0;
`;

const NavTabs = styled.div`
  display: flex;
  align-items: flex-end;
  height: 27px;
  flex: none;
  padding-left: 3px;
`;

const NavTab = styled.button`
  display: flex;
  align-items: center;
  justify-content: center;
  width: ${p => (p.$on ? 36 : 31)}px;
  height: ${p => (p.$on ? 27 : 24)}px;
  border: 1px solid #fff;
  border-right: 2px solid ${p => (p.$soft ? '#eee' : '#777')};
  border-bottom: 0;
`;

const NavPage = styled.div`
  display: flex;
  flex-direction: column;
  flex: 1;
  min-height: 0;
  padding: 7px 10px 4px 1px;
  border: 1px solid #fff;
  border-right: 1px solid #777;
  border-bottom: 0;
`;

const NavTools = styled.div`
  display: flex;
  align-items: center;
  width: 216px;
  height: 26px;
  flex: none;
  margin-bottom: 18px;
  padding-left: 9px;
  background: #dcdde0;
  border-bottom: 1px solid #aaa;
`;

const Tree = styled.div`
  flex: 1;
  min-height: 0;
  background: #fff;
  overflow: hidden;
  font: 12px/18px "Noto Sans Mono CJK SC", "Noto Sans CJK SC", sans-serif;
`;

const TreeRow = styled.div`
  display: flex;
  align-items: center;
  height: 18px;
  white-space: pre;
`;

const TreeText = styled.span`
  margin-left: ${p => (p.$sel ? 1 : 2)}px;
  padding: 0 2px;
  ${p => p.$sel && css`
    flex: 1;
    background: #1ea0ff;
    color: #fff;
    font-weight: 700;
    text-decoration: underline;
  `}
`;

const Guide = styled.span`
  position: relative;
  display: flex;
  align-items: center;
  justify-content: center;
  width: 19px;
  height: 18px;
  flex: none;
  &::before {
    content: '';
    position: absolute;
    left: 9px;
    top: 0;
    height: ${p => (p.$k === 'l' ? 9 : 18)}px;
    border-left: ${p => (p.$k === ' ' ? 0 : 1)}px dotted #777;
  }
  &::after {
    content: '';
    position: absolute;
    left: 9px;
    right: 0;
    top: 9px;
    border-top: ${p => ('tl'.includes(p.$k) ? 1 : 0)}px dotted #777;
  }
`;

const Expander = styled.button`
  position: relative;
  z-index: 1;
  width: 9px;
  height: 9px;
  border: 1px solid #666;
  background: linear-gradient(#000, #000) 1px 3px / 5px 1px no-repeat #fff;
`;

const HScroll = styled.div`
  display: flex;
  height: 17px;
  flex: none;
  background: repeating-conic-gradient(#fff 0 25%, #ececec 0 50%) 0 0 / 2px 2px;
`;

const ScrollBtn = styled.button`
  display: flex;
  align-items: center;
  justify-content: center;
  width: 17px;
  height: 17px;
  background: #f0f0f0;
  border: 1px solid #fff;
  border-right-color: #777;
  border-bottom-color: #777;
`;

const Thumb = styled.span`
  width: 118px;
  margin-right: auto;
  background: #f0f0f0;
  border: 1px solid #fff;
  border-right: 2px solid #777;
  border-bottom: 2px solid #777;
`;

/* ---------- viewport ---------- */

const ViewFrame = styled.section`
  display: grid;
  grid-template-columns: 1fr 17px;
  grid-template-rows: 1fr 17px;
  flex: 1;
  min-width: 0;
  margin: 0 6px 0 5px;
  border-top: 2px solid #6e6e6e;
  border-left: 2px solid #6e6e6e;
  border-bottom: 1px solid #fff;
  background: #f0f0f0;
`;

const Canvas = styled.div`
  position: relative;
  overflow: hidden;
  background: #8f8f8f;
`;

const Compass = styled.svg`
  position: absolute;
  left: 10px;
  bottom: 14px;
`;

const VBar = styled.div`
  display: flex;
  flex-direction: column;
  align-items: center;
  justify-content: space-between;
  padding: 5px 0 4px;
`;

const HBar = styled.div`
  display: flex;
  align-items: center;
  justify-content: space-between;
  padding: 0 4px 0 3px;
`;

const Chev = ({ d, c = '#b8b8b8', w = 2 }) => (
  <svg width="9" height="9" viewBox="0 0 9 9" fill="none" stroke={c} strokeWidth={w}><path d={d} /></svg>
);

const topPath = () => {
  const out = [];
  for (let i = 0; i <= 14; i++) {
    const a = [338 - 2.2 * i, 368 + 9.1 * i];
    const b = [749 - 3.15 * i, 315.700 + 8.700 * i];
    out.push(`M${a}L${b}`);
    if (i % 2 === 0 && i > 0 && i < 14) out.push(`M${a}L${a[0] - 1.500},${a[1] + 9.100}`);
    if (i % 2 === 1 || i === 0) out.push(`M${b}L${b[0] - 2},${b[1] + 8.700}`);
  }
  return out.join('');
};

const sidePath = () => {
  const out = [];
  for (let k = 0; k <= 8; k++) {
    const a = [736.500 + 4.200 * k, 311 + 12.300 * k];
    const b = [706 + 4.300 * k, 439 + 12.600 * k];
    out.push(`M${a}L${b}`);
    if (k % 2 === 0 && k < 8) out.push(`M${b}l4.300,12.600`);
    else if (k < 8) out.push(`M${a}l4.200,12.300`);
  }
  return out.join('');
};

const Dim = ({ text, xs, ys }) => (
  <text x={xs} y={ys} rotate="-9" fill="none" stroke="#0000ff" strokeWidth="1" fontFamily="DejaVu Sans, sans-serif" fontWeight="700" fontSize="27">{text}</text>
);

const Scene = () => (
  <svg width="100%" height="100%" shapeRendering="crispEdges">
    <polygon points="348,377 738,321 709,438 319,496" fill="#848484" />
    <polygon points="319,496 709,438 741,538 351,595" fill="#5a5a5a" />
    <polygon points="738,321 709,438 741,538 770,419" fill="#4f4f4f" />
    <path d="M319 496L348 377L738 321" fill="none" stroke="#5a5a5a" />
    <path d={topPath()} fill="none" stroke="#3c8080" />
    <path d={sidePath()} fill="none" stroke="#3c8080" />
    <path d="M355 345L446 332M654 301L746 288M746.500 283L739 320M739 320L855 303M847 304L837 352M830 373L819 422M709 438L826 421M817 423L827 456M837 486L848 521M741 537L856 520M355 345V350" fill="none" stroke="#00f" />
    <Dim text="100.00" xs="457 496 533 561 585 622" ys="341 336 330 325 323 317" />
    <Dim text="50.00" xs="759 796 826 849 886" ys="386 380 375 372 367" />
    <Dim text="30.00" xs="761 797 832 850 886" ys="494 488 487 481 475" />
    <path d="M348 378L357 330M333 360L338 375H346" fill="none" stroke="#0f0" />
    <path d="M332 361L338 372M331 382L329 398L348 394M362 362V374" stroke="#f00" strokeDasharray="2 3" fill="none" />
    <path d="M348 377L338 350" stroke="#00b400" strokeWidth="3" />
    <polygon points="335,341 334,354 342,351" fill="#00b400" />
    <path d="M348 377L352 357" stroke="#d00000" strokeWidth="3" />
    <polygon points="354,350 348,360 356,361" fill="#d00000" />
    <path d="M348 378L380 373" stroke="#0000c8" strokeWidth="3" />
    <polygon points="392,371 379,369 380,377" fill="#0000c8" />
    <path d="M333 360L330 350" stroke="#0000c8" strokeWidth="3" />
    <polygon points="327,341 326,353 334,351" fill="#0000c8" />
    <path d="M338 362L333 334M331 342L333 334L336 341" stroke="#00f" fill="none" />
    <path d="M392 373L408 369M392 369L400 371L392 375" stroke="#f00" fill="none" />
    <g fontFamily="Noto Sans, sans-serif" fontSize="15">
      <text x="324" y="329" fontSize="20" fontWeight="300" fill="#00f">Z</text>
      <text x="353" y="339" fill="#0f0">Y</text>
      <text x="343" y="356" fontWeight="700" fill="#0f0">Y</text>
      <text x="359" y="363" fontWeight="700" fill="#f00">X</text>
      <text x="407" y="370" fontSize="11" fill="#f00">Y</text>
    </g>
    <text x="347" y="393" fontSize="15" fontWeight="700" fill="#00f">俯视图</text>
    <path d="M738 309L755 306" stroke="#0f0" />
    <path d="M755 306L766 305" stroke="#0000c8" strokeWidth="3" />
    <polygon points="777,303 764,301 766,309" fill="#0000c8" />
    <path d="M302 478L304 486" stroke="#b00" strokeWidth="3" />
    <polygon points="308,496 300,486 307,484" fill="#c00000" />
    <path d="M760 539L748 540" stroke="#e00" strokeWidth="3" />
    <polygon points="738,541 749,536 749,544" fill="#c00000" />
  </svg>
);

/* ---------- properties ---------- */

const PropTabs = styled.div`
  display: flex;
  gap: 3px;
  height: 26px;
  flex: none;
  padding: 4px 0 0 2px;
  background: #e9e9e9;
`;

const PropTab = styled.button`
  padding: 0 5px 2px;
  height: 21px;
  background: #f0f0f0;
  border: 1px solid ${p => (p.$on ? '#888' : '#f0f0f0')};
  border-bottom: 0;
`;

const PropBody = styled.div`
  display: flex;
  flex-direction: column;
  flex: 1;
  min-height: 0;
  margin: 0 0 1px 2px;
  border: 1px solid #999;
  border-right: 0;
  border-bottom: 2px solid #aaa;
  background: linear-gradient(#ddd, #ddd) 135px 0 / 1px 100% no-repeat #fff;
  font-family: "Noto Sans Mono CJK SC", "Noto Sans CJK SC", sans-serif;
  font-size: 12px;
`;

const PropTable = styled.table`
  width: 100%;
  table-layout: fixed;
  border-collapse: separate;
  border-spacing: 0;
  th { text-align: left; font-weight: 400; height: 20px; padding: 0 0 0 4px; }
  td { height: 16px; padding: 0; line-height: 15px; border-bottom: 1px solid #ddd; }
  td:first-child { padding-left: 19px; border-right: 1px solid #ddd; }
  tr.cat td { padding: 0; height: 15px; background: #889dc4; border: 0; font-weight: 700; }
`;

const CatLine = styled.div`
  display: flex;
  align-items: center;
  padding: 0 1px 0 5px;
  height: 15px;
  font-size: 13px;
  span { flex: 1; padding-left: 7px; }
`;

const Cell = styled.div`
  display: flex;
  align-items: center;
  height: 15px;
  padding-left: ${p => p.$pl || 0}px;
  gap: 6px;
  overflow: hidden;
`;

const Value = styled.select`
  appearance: none;
  flex: 1;
  min-width: 0;
  height: 15px;
  line-height: 15px;
  outline: 0;
`;

const DropBox = styled.span`
  display: flex;
  align-items: center;
  justify-content: center;
  width: 15px;
  height: 15px;
  flex: none;
  margin-right: -6px;
  background: #e1e1e1;
  border: 1px solid #aaa;
`;

const Pick = styled.button`
  width: 12px;
  height: 15px;
  flex: none;
  overflow: hidden;
`;

const LayerMark = styled.span`
  padding: 0 1px;
  font: 700 12px/14px "DejaVu Sans", sans-serif;
  color: #000080;
  background: linear-gradient(#000080, #000080) 0 7px / 100% 1px no-repeat;
`;

const PropFoot = styled.div`
  display: flex;
  gap: 3px;
  height: 19px;
  flex: none;
  margin-top: auto;
`;

const Detail = styled.button`
  width: 134px;
  background: #ccc;
  border: 1px solid #b4b4b4;
  color: #808080;
  text-shadow: 1px 1px #fff;
`;

const CsBox = styled.label`
  display: flex;
  flex: 1;
  background: #fff;
  border: 1px solid #777;
  border-right: 0;
  padding-left: 3px;
  overflow: hidden;
`;

/* ---------- bottom ---------- */

const SelectBar = styled.div`
  display: flex;
  align-items: center;
  height: 28px;
  flex: none;
  padding-left: 11px;
  margin-right: 62px;
  background: #f0f0f0;
  box-shadow: 62px 0 #dcdde0;
`;

const Cluster = styled.div`
  display: flex;
  gap: ${p => p.$gap || 5}px;
  padding-left: ${p => p.$pl || 12}px;
  margin-left: ${p => p.$ml || 0}px;
  border-left: 2px solid ${p => (p.$plain ? 'transparent' : '#dcdcdc')};
`;

const SelButton = styled.button`
  display: flex;
  align-items: center;
  justify-content: ${p => (p.$wide ? 'space-around' : 'center')};
  width: ${p => (p.$wide ? 46 : 23)}px;
  height: 24px;
  flex: none;
  background: ${p => (p.$on ? '#cce4f7' : p.$off ? '#c8c8c8' : '#e1e1e1')};
  border: 1px solid ${p => (p.$on ? '#00549e' : p.$off ? '#c0c0c0' : '#acacac')};
  &:not(:disabled) + &:disabled { margin-left: 4px; }
`;

const WideDown = styled.span`
  border: 5px solid transparent;
  border-top: 6px solid #000;
  border-bottom: 0;
`;

const Status = styled.footer`
  display: flex;
  align-items: center;
  height: 24px;
  flex: none;
  padding-left: 6px;
  background: #dcdde0;
  border-top: 1px solid #a8a594;
  font: 16px/22px "Noto Sans Mono CJK SC", "Noto Sans CJK SC", monospace;
  color: #222;
`;

const StatusMsg = styled.span`
  flex: 1;
  padding-bottom: 2px;
`;

const StatusIcons = styled.div`
  display: flex;
  align-items: center;
  gap: 6px;
  margin-right: 6px;
`;

const StatusBtn = styled.button`
  display: flex;
  align-items: center;
  justify-content: center;
  width: 18px;
  height: 18px;
  border: 1px solid ${p => (p.$on ? '#00549e' : '#b4b4b4')};
  background: ${p => (p.$on ? '#cce4f7' : 'none')};
`;

const Coords = styled.output`
  width: 186px;
  padding-bottom: 2px;
  white-space: pre;
`;

const Mark = styled.div`
  position: relative;
  display: flex;
  align-items: center;
  align-self: stretch;
  width: 214px;
  padding-left: 1px;
`;

const Sunken = styled.span`
  margin-left: auto;
  width: 175px;
  height: 22px;
  background: #bfbfbf;
  border: 1px solid #111;
  border-right: 0;
`;

const MarkText = styled.span`
  position: absolute;
  left: 2px;
  top: 0;
  white-space: pre;
  color: #c9c9c9;
  text-shadow: 1px 1px #555;
  line-height: 18px;
`;

/* ---------- data ---------- */

const menus = ['视图', '编辑', '刀具路径', '路径编辑', '分析', '工具', '帮助'];

const bigButtons = [
  ['zoomWin', '窗口观察', 61], ['zoomAll', '全部观察', 61], ['rotate', '旋转观察', 61], ['pan', '平移观察', 61], ['redraw', '重画', 46],
];

const views = [['top', '俯视图'], ['bottom', '底视图'], ['front', '前视图'], ['back', '后视图'], ['right', '右视图'], ['left', '左视图']];

// | separator, v drop arrow, e overflow arrow, g grip, * marks a pressed tool
const tools = 'page open save | undo v redo V | cross cut copy paste e g isoCube v cubeTop cubeFront cubeRight plane v | axesZX v | globe sphere *redSphere disc globe3 v | sphereHand slice | *snapLamp geoLamp machLamp e g zoomArea zoomOut zoomIn zoomGray fit zoomPrev | hand zoomPM move3d spin e g bulb bulbGreen bulbGray bulbBox bulbBoxGreen | swap arrowL arrowR e'.split(' ');

const sideTools = '*endPt nearPt *midPt *interPt *center quad *perp tangent | *gridPt *axesXYZ | patchA patchB patchC | pickPt pickX | project along ptList bigX'.split(' ');

const tree = [
  ['', 'proj', '项目'],
  ['t', 'projSet', '项目设置', 1],
  ['vt', 'cs', '加工坐标系', 1],
  ['vvt', 'csGray', '世界坐标系'],
  ['vvt', 'csBlue', '俯视图'],
  ['vvl', 'csCheck', '右视图'],
  ['vt', 'tools3', '刀具表'],
  ['vl', 'pathSet', '路径设置'],
  ['t', 'proj', '几何体列表', 1],
  ['vl', 'surf', '曲面几何体1'],
  ['t', 'hatch', '刀具平面(俯视图) -1', 1],
  ['vl', 'folder', '1- 路径组 1', 1],
  ['v l', 'strips', '(1) 成组平面行切加工', 0, 'check'],
  ['l', 'hatchRed', '刀具平面(右视图) -2', 1],
  [' l', 'folder', '2- 路径组 1', 1],
  ['  l', 'strips', '(2) 成组平面行切加工', 0, 'check', true],
];

const props = [
  ['*颜色', '随图层', null],
  ['*点型', '星形', 'point'],
  ['*线型', '随图层', 'layer'],
  ['*线宽', '随图层', 'layer'],
];

const clusters = [
  { ml: 14, items: ['*cursor', 'marquee', 'chain', 'spline', 'star'] },
  { ml: 11, items: ['selPts', 'selLine', 'selSurf', 'selGreen', 'selMulti', 'selCirc', 'selCircG', 'selFour'] },
  { ml: 10, items: ['filAll'] },
  { ml: -5, plain: true, items: ['*filPts', '*filLine', '*filSurf'] },
  { ml: 3, pl: 3, items: ['order'] },
  { ml: 3, pl: 6, gap: 6, items: ['*visA', '*visB', '*visC', 'visD'] },
  { ml: 10, items: ['grpA', 'grpB', '!undoGray', '!grpGray'] },
];

const renderTool = (t, i) => {
  if (t === '|') return <ToolSep key={i} />;
  if (t === 'g') return <Grip key={i} />;
  if (t === 'v' || t === 'V') return <ToolDrop key={i} aria-label="more"><Down $c={t === 'V' ? '#999' : '#000'} /></ToolDrop>;
  if (t === 'e') return <ToolDrop key={i} $low aria-label="options"><Down /></ToolDrop>;
  const name = t.replace('*', '');
  return <Tool key={i} $on={t[0] === '*'} aria-label={name}><Icon n={name} /></Tool>;
};

const renderSel = t => {
  const name = t.replace(/[*!]/, '');
  const wide = name === 'order';
  return (
    <SelButton key={t} $on={t[0] === '*'} $off={t[0] === '!'} $wide={wide} disabled={t[0] === '!'} aria-label={name}>
      <Icon n={name} />
      {wide && <WideDown />}
    </SelButton>
  );
};

const Controls = ({ tight }) => (
  <WinCtl $tight={tight}>
    <Plain $w={14} aria-label="minimize"><Icon n="minimize" size={14} box={14} /></Plain>
    <Plain $w={14} aria-label="restore"><Icon n="restore" size={14} box={14} /></Plain>
    <Plain $w={14} aria-label="close"><Icon n="closeW" size={14} box={14} /></Plain>
  </WinCtl>
);

const App = () => (
  <Shell>
    <GlobalStyle />
    <TitleBar>
      <Quick>
        <Logo>
          <svg width="26" height="24" viewBox="0 0 26 24">
            <path d="M8 2H3V16Q3 19 6 19H17Q20 19 20 16V11" fill="none" stroke="#18a0d8" strokeWidth="5" />
            <path d="M7 12L18 0H24L11 13z" fill="#d8d0c8" stroke="#666" />
          </svg>
        </Logo>
        <ThinLine />
        {['page', 'open', 'save', 'saveAs', 'wrench'].map(n => <Plain key={n} aria-label={n}><Icon n={n} /></Plain>)}
        <Plain $w={10} aria-label="customize"><Down $c="#ddd" /></Plain>
        <ThinLine />
        <Plain aria-label="play"><Icon n="play" /></Plain>
      </Quick>
      <Title>JDSoft SurfMill Pro 8.0 - [无标题1]</Title>
      <Gauge>{Array.from({ length: 19 }, (_, i) => <span key={i} />)}</Gauge>
      <Controls />
    </TitleBar>

    <MenuBar>
      <FileTab>文件</FileTab>
      {menus.map((m, i) => <Tab key={m} $on={i === 0}>{m}</Tab>)}
      <MenuRight>
        <Plain aria-label="full screen"><Icon n="screenPick" /></Plain>
        <Plain $w={21} aria-label="collapse"><Icon n="chevUp" size={15} /></Plain>
        <MenuDrop>窗口<Down $c="#ddd" /></MenuDrop>
        <MenuDrop>样式<Down $c="#ddd" /></MenuDrop>
        <span>北京精雕集团</span>
        <Help>?</Help>
        <Controls tight />
      </MenuRight>
    </MenuBar>

    <Ribbon>
      <Group $pl={8}>
        <GroupBody>
          {bigButtons.map(([n, label, w]) => <BigButton key={n} $w={w}><BigIcon n={n} />{label}</BigButton>)}
          <ListBox>
            <ListRow $off><Icon n="listPick" />选择观察</ListRow>
            <ListRow><Icon n="zoomPrev" />上次观察</ListRow>
            <ListRow><Icon n="one" />1：1观察</ListRow>
          </ListBox>
          <Arrows>
            <Plain $h={20} aria-label="up"><Up /></Plain>
            <Plain $h={20} aria-label="down"><Down /></Plain>
            <Plain $h={20} aria-label="all"><Down /></Plain>
          </Arrows>
        </GroupBody>
        <GroupLabel><span>观察</span><Plain $w={14} aria-label="group options"><Down /></Plain></GroupLabel>
      </Group>
      <Group $pl={5} $pr={7}>
        <GroupBody>
          <Stack>
            <RowButton><Icon n="plus" />正交捕捉</RowButton>
            <RowButton $on><Icon n="boxX" />特征点自动捕捉</RowButton>
            <RowButton><Icon n="align" />对齐拾取模式</RowButton>
          </Stack>
        </GroupBody>
        <GroupLabel><span>捕捉</span><Plain $w={14} aria-label="group options"><Down /></Plain></GroupLabel>
      </Group>
      <Group>
        <GroupBody>
          {views.map(([f, label]) => <BigButton key={f} $w={47}><ViewCube face={f} />{label}</BigButton>)}
          <Grid $cols={3}>
            {['isoCube', 'hexTurn', 'plane', 'globe', 'sphere', '*redSphere', 'disc'].map(t => (
              <SmallButton key={t} $on={t[0] === '*'} aria-label={t}><Icon n={t.replace('*', '')} /></SmallButton>
            ))}
          </Grid>
          <InnerSep />
          <Stack>
            <RowButton><Icon n="light" />设置光源</RowButton>
            <RowButton><Icon n="material" />设置材质</RowButton>
          </Stack>
          <InnerSep />
          <Grid $cols={1}>
            <SmallButton $on aria-label="snapLamp"><Icon n="snapLamp" /></SmallButton>
            <SmallButton aria-label="geoLamp"><Icon n="geoLamp" /></SmallButton>
            <SmallButton aria-label="machLamp"><Icon n="machLamp" /></SmallButton>
          </Grid>
        </GroupBody>
        <GroupLabel><span>设置</span><Plain $w={14} aria-label="group options"><Down /></Plain></GroupLabel>
      </Group>
      <RibbonEnd><Down as="div" /></RibbonEnd>
    </Ribbon>

    <ToolBar>
      <Grip $first />
      {tools.map(renderTool)}
    </ToolBar>

    <Main>
      <SideStrip>
        <SideGrip />
        <Tool aria-label="plusArrow"><Icon n="plusArrow" /></Tool>
        <Plain $h={13} aria-label="expand"><Icon n="tri" size={13} /></Plain>
        <SideSep />
        {sideTools.map((t, i) => (t === '|' ? <SideSep key={i} /> : renderTool(t, i)))}
      </SideStrip>

      <Panel $w={277}>
        <PanelTitle $pr={4}>
          <span>导航工作条</span>
          <Plain aria-label="pin"><Icon n="pin" size={12} /></Plain>
          <Plain aria-label="close"><Icon n="closeP" size={14} /></Plain>
        </PanelTitle>
        <NavBody>
          <NavTabs>
            <NavTab aria-label="geometry"><Icon n="navA" size={20} box={20} /></NavTab>
            <NavTab $soft aria-label="surface"><Icon n="navB" size={21} box={21} /></NavTab>
            <NavTab $on aria-label="machining"><Icon n="navC" size={21} box={21} /></NavTab>
          </NavTabs>
          <NavPage>
            <NavTools>
              {['stripStar', 'runner', 'winList', 'vBlock', 'bolt', 'doc'].map(renderTool)}
            </NavTools>
            <Tree role="tree">
              {tree.map(([guides, icon, label, open, extra, sel]) => (
                <TreeRow key={guides + label} role="treeitem">
                  {guides.split('').map((k, i) => (
                    <Guide key={i} $k={k}>
                      {open && i === guides.length - 1 ? <Expander aria-label="collapse" /> : null}
                    </Guide>
                  ))}
                  <Icon n={icon} />
                  {extra && <Icon n={extra} size={18} />}
                  <TreeText $sel={sel}>{label}</TreeText>
                </TreeRow>
              ))}
            </Tree>
            <HScroll>
              <ScrollBtn aria-label="left"><svg width="6" height="8"><path d="M5 0V8L1 4z" /></svg></ScrollBtn>
              <Thumb />
              <ScrollBtn aria-label="right"><svg width="6" height="8"><path d="M1 0V8L5 4z" /></svg></ScrollBtn>
            </HScroll>
          </NavPage>
        </NavBody>
      </Panel>

      <ViewFrame>
        <Canvas>
          <Scene />
          <Compass width="80" height="62" viewBox="10 719 80 62" shapeRendering="crispEdges" fill="none">
            <path d="M25 746L29 729L57 725L66 749L61 766L53 743L25 746M53 743L57 725M29 729L32 737M34 746L36 752M42 752L50 751M58 750L66 748" stroke="#009000" />
            <path d="M33 770L36 754M33 757L36 753L37 762M37 737L39 744L42 737M39 744V751" stroke="#0f0" />
            <path d="M33 770L25 748M24 754L25 747L29 754" stroke="#00f" strokeWidth="1.500" />
            <path d="M33 770L61 766M51 765L61 766L52 770" stroke="#f00" strokeWidth="1.500" />
            <text x="16" y="742" fontSize="18" fontFamily="Noto Sans, sans-serif" fill="#00f">Z</text>
            <text x="69" y="771" fontSize="16" fontFamily="Noto Sans, sans-serif" fill="#f00">X</text>
          </Compass>
        </Canvas>
        <VBar><Chev d="M1 6L4.500 2.500L8 6" /><Chev d="M1 3L4.500 6.500L8 3" /></VBar>
        <HBar><Chev d="M6 1L2.500 4.500L6 8" /><Chev d="M3 1L6.500 4.500L3 8" /></HBar>
      </ViewFrame>

      <Panel $w={269}>
        <PanelTitle $pr={0}>
          <span>对象属性</span>
          <Plain $w={14} aria-label="pin"><Icon n="pin" size={12} /></Plain>
          <Plain $w={10} aria-label="close"><Icon n="closeP" size={14} /></Plain>
        </PanelTitle>
        <PropTabs>
          <PropTab $on>对象属性</PropTab>
          <PropTab>图层</PropTab>
        </PropTabs>
        <PropBody>
          <PropTable>
            <colgroup><col style={{ width: 136 }} /><col /></colgroup>
            <thead><tr><th>对象属性</th><th>数值</th></tr></thead>
            <tbody>
              <tr className="cat">
                <td colSpan="2">
                  <CatLine>
                    <svg width="7" height="11" viewBox="0 0 7 11" fill="none" stroke="#234a98" strokeWidth="1.500"><path d="M5 0L2 3L5 5M5 5L2 8L5 11" strokeDasharray="2 1" /></svg>
                    <span>一般信息</span>
                    <svg width="14" height="14" viewBox="0 0 14 14" fill="none" stroke="#fff"><circle cx="7" cy="7" r="6" /><path d="M4.500 7L7 4.500L9.500 7M4.500 10L7 7.500L9.500 10" /></svg>
                  </CatLine>
                </td>
              </tr>
              {props.map(([name, value, mark]) => (
                <tr key={name}>
                  <td>{name}</td>
                  <td>
                    <Cell $pl={mark ? 2 : 6}>
                      {mark === 'point' && <Icon n="starPt" size={13} />}
                      {mark === 'layer' && <LayerMark>layer</LayerMark>}
                      <Value aria-label={name} defaultValue={value}><option>{value}</option></Value>
                      <DropBox><Chev d="M.5 3L4.500 6.500L8.500 3" c="#555" w={1} /></DropBox>
                      <Pick aria-label="pick"><Icon n="pipette" size={15} /></Pick>
                    </Cell>
                  </td>
                </tr>
              ))}
            </tbody>
          </PropTable>
          <PropFoot>
            <Detail disabled>对象详细信息</Detail>
            <CsBox>
              <Value aria-label="坐标系" defaultValue="世界坐标系"><option>世界坐标系</option></Value>
              <ScrollBtn as="span"><Down /></ScrollBtn>
            </CsBox>
          </PropFoot>
        </PropBody>
      </Panel>
    </Main>

    <SelectBar>
      {clusters.map((c, i) => (
        <Cluster key={i} $ml={c.ml} $pl={c.pl} $gap={c.gap} $plain={c.plain}>{c.items.map(renderSel)}</Cluster>
      ))}
    </SelectBar>

    <Status>
      <StatusMsg>没有对象被选择</StatusMsg>
      <StatusIcons>
        <Plain $w={18} aria-label="refresh"><Icon n="refresh" /></Plain>
        <StatusBtn aria-label="windows"><Icon n="winStack" /></StatusBtn>
        <StatusBtn aria-label="log"><Icon n="scroll" /></StatusBtn>
        <StatusBtn aria-label="ortho"><Icon n="plus" /></StatusBtn>
        <StatusBtn $on aria-label="snap"><Icon n="boxX" /></StatusBtn>
        <StatusBtn aria-label="align"><Icon n="align" /></StatusBtn>
      </StatusIcons>
      <Coords>195.979 -68.070 0.0</Coords>
      <Mark>
        <svg width="8" height="14"><path d="M0 0L8 7L0 14z" /></svg>
        <Sunken />
        <MarkText>UG爱好者论坛 WWW.UGSNX.COM</MarkText>
      </Mark>
    </Status>
  </Shell>
);

export default App;
